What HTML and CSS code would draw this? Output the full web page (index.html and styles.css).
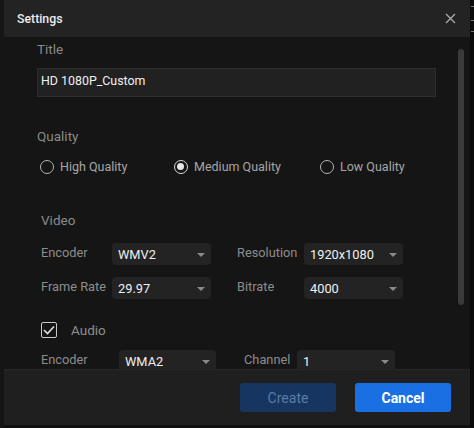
FILE: index.html
```html
<!DOCTYPE html>
<html>
<head>
<meta charset="utf-8">
<link rel="stylesheet" href="styles.css">
</head>
<body>
<div class="page">
  <div class="edge-left"></div>
  <div class="dialog">
    <div class="header">
      <span class="header-title">Settings</span>
      <svg class="close" width="11" height="11" viewBox="0 0 11 11"><path d="M1 1L10 10M10 1L1 10" stroke="#a8a8a8" stroke-width="1.4" fill="none"/></svg>
    </div>
    <div class="body">
      <div class="content">
        <div class="label">Title</div>
        <div class="input">HD 1080P_Custom</div>

        <div class="label quality-label">Quality</div>
        <div class="radios">
          <div class="radio r-high"><span class="circle"></span>High Quality</div>
          <div class="radio r-med"><span class="circle checked"></span>Medium Quality</div>
          <div class="radio"><span class="circle"></span>Low Quality</div>
        </div>

        <div class="section">
          <div class="label video-label">Video</div>
          <div class="grid video-grid">
            <span class="flabel">Encoder</span>
            <div class="select">WMV2<span class="caret"></span></div>
            <span class="flabel">Resolution</span>
            <div class="select">1920x1080<span class="caret"></span></div>
            <span class="flabel">Frame Rate</span>
            <div class="select">29.97<span class="caret"></span></div>
            <span class="flabel">Bitrate</span>
            <div class="select">4000<span class="caret"></span></div>
          </div>

          <div class="check-row">
            <span class="checkbox"><svg width="12" height="10" viewBox="0 0 12 10"><path d="M1 5L4.5 8.5L11 1.5" stroke="#e0e0e0" stroke-width="1.6" fill="none"/></svg></span>
            <span class="check-label">Audio</span>
          </div>
          <div class="grid audio-grid">
            <span class="flabel">Encoder</span>
            <div class="select">WMA2<span class="caret"></span></div>
            <span class="flabel">Channel</span>
            <div class="select">1<span class="caret"></span></div>
          </div>
        </div>
      </div>
      <div class="scrollbar"></div>
    </div>
    <div class="footer">
      <button class="btn btn-create">Create</button>
      <button class="btn btn-cancel">Cancel</button>
    </div>
  </div>
  <div class="edge-right"><span class="mark m1"></span><span class="mark m2"></span><span class="mark m3"></span></div>
</div>
</body>
</html>
```
FILE: styles.css
```css
* { box-sizing: border-box; }
html, body { margin: 0; padding: 0; }
body {
  width: 474px;
  height: 428px;
  background: #101010;
  font-family: Roboto, "Liberation Sans", sans-serif;
  overflow: hidden;
}
.page {
  display: flex;
  height: 428px;
}
.edge-left {
  width: 4px;
  background: #151515;
}
.edge-right {
  width: 4px;
  background: #0a0a0a;
  position: relative;
}
.mark {
  position: absolute;
  left: 1px;
  width: 3px;
  height: 1px;
  background: #777;
}
.m1 { top: 6px; }
.m2 { top: 20px; }
.m3 { top: 31px; }
.dialog {
  width: 466px;
  height: 425px;
  display: flex;
  flex-direction: column;
  background: #161616;
}
.header {
  height: 37px;
  flex: none;
  background: #232323;
  display: flex;
  align-items: center;
  justify-content: space-between;
  padding: 0 14px 0 13px;
}
.header-title {
  color: #ececec;
  font-size: 12.3px;
  font-weight: 500;
}
.body {
  flex: 1;
  position: relative;
  overflow: hidden;
  background: #151515;
}
.content {
  padding: 3px 0 0 33px;
}
.label {
  font-size: 13.5px;
  line-height: 18px;
  color: #8a8a8a;
}
.input {
  margin-top: 10px;
  width: 399px;
  height: 29px;
  background: #212121;
  border: 1px solid #2e2e2e;
  color: #f0f0f0;
  font-size: 12.4px;
  line-height: 24px;
  padding-left: 3px;
}
.quality-label {
  margin-top: 30px;
}
.radios {
  display: flex;
  margin-top: 13px;
  padding-left: 3px;
  font-size: 12.5px;
  line-height: 18px;
  color: #a6a6a6;
}
.radio {
  display: flex;
  align-items: center;
}
.r-high { width: 134px; }
.r-med { width: 146px; }
.circle {
  width: 14px;
  height: 14px;
  border: 1.5px solid #b4b4b4;
  border-radius: 50%;
  margin-right: 6px;
  position: relative;
}
.circle.checked {
  border-color: #d8d8d8;
}
.circle.checked::after {
  content: "";
  position: absolute;
  left: 2px;
  top: 2px;
  width: 7px;
  height: 7px;
  border-radius: 50%;
  background: #e6e6e6;
}
.section {
  padding-left: 4px;
}
.video-label {
  margin-top: 35px;
}
.grid {
  display: grid;
  align-items: center;
  row-gap: 12px;
}
.video-grid {
  margin-top: 14px;
  grid-template-columns: 71px 99px 26px 67px 99px;
}
.video-grid .flabel:nth-child(3),
.video-grid .flabel:nth-child(7) {
  grid-column: 4;
}
.audio-grid {
  margin-top: 12px;
  grid-template-columns: 78px 97px 28px 53px 98px;
}
.audio-grid .flabel:nth-child(3) {
  grid-column: 4;
}
.flabel {
  font-size: 12.8px;
  color: #8c8c8c;
  line-height: 18px;
  margin-top: -2px;
}
.select {
  height: 22px;
  background: #232323;
  border-radius: 4px;
  color: #f0f0f0;
  font-size: 12.8px;
  line-height: 23px;
  padding-left: 6px;
  position: relative;
}
.caret {
  position: absolute;
  right: 6px;
  top: 10px;
  width: 0;
  height: 0;
  border-left: 4px solid transparent;
  border-right: 4px solid transparent;
  border-top: 4px solid #8a8a8a;
}
.check-row {
  display: flex;
  align-items: center;
  margin-top: 23px;
}
.checkbox {
  width: 16px;
  height: 16px;
  border: 1.5px solid #c8c8c8;
  border-radius: 2px;
  display: flex;
  align-items: center;
  justify-content: center;
}
.check-label {
  margin-left: 14px;
  font-size: 13.5px;
  color: #8e8e8e;
}
.scrollbar {
  position: absolute;
  left: 454px;
  top: 12px;
  width: 6px;
  height: 256px;
  border-radius: 3px;
  background: #3a3a3a;
}
.footer {
  height: 56px;
  flex: none;
  background: #1f1f1f;
  border-top: 1px solid #262626;
  display: flex;
  justify-content: flex-end;
  align-items: flex-start;
  padding: 13px 19px 0 0;
  gap: 19px;
}
.btn {
  width: 96px;
  height: 29px;
  border: none;
  border-radius: 3px;
  font-family: Roboto, "Liberation Sans", sans-serif;
  font-size: 14px;
  padding: 0;
}
.btn-create {
  background: #163560;
  color: #5c7ba6;
}
.btn-cancel {
  background: #1a70e2;
  color: #ffffff;
  font-weight: 700;
}
```
